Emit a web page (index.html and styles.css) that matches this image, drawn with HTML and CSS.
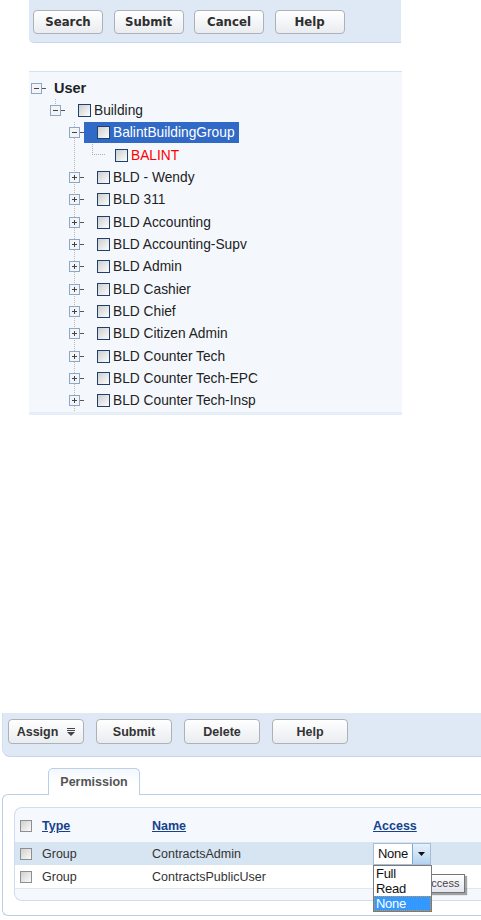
FILE: index.html
```html
<!DOCTYPE html>
<html>
<head>
<meta charset="utf-8">
<title>Permissions</title>
<link rel="stylesheet" href="styles.css">
</head>
<body>
<div class="tb1">
  <button class="btn1">Search</button>
  <button class="btn1">Submit</button>
  <button class="btn1">Cancel</button>
  <button class="btn1">Help</button>
</div>

<div class="tree">
  <div class="row r0">
    <svg class="exp" width="15" height="11" viewBox="0 0 15 11"><rect x="0.5" y="0.5" width="10" height="10" fill="#f3f4f6" stroke="#8ea6c8"/><path d="M3 5.5h5" stroke="#444"/><path d="M11 5.5h4" stroke="#555"/></svg>
    <span class="ulabel">User</span>
  </div>
  <div class="kids1">
    <div class="row r1">
      <svg class="exp" width="15" height="11" viewBox="0 0 15 11"><rect x="0.5" y="0.5" width="10" height="10" fill="#f3f4f6" stroke="#8ea6c8"/><path d="M3 5.5h5" stroke="#444"/><path d="M11 5.5h4" stroke="#555"/></svg>
      <span class="node"><span class="cb"></span><span class="lbl">Building</span></span>
    </div>
    <div class="kids2">
      <div class="row r2">
        <svg class="exp" width="15" height="11" viewBox="0 0 15 11"><rect x="0.5" y="0.5" width="10" height="10" fill="#f3f4f6" stroke="#8ea6c8"/><path d="M3 5.5h5" stroke="#444"/><path d="M11 5.5h4" stroke="#555"/></svg>
        <span class="node sel"><span class="cb"></span><span class="lbl">BalintBuildingGroup</span></span>
      </div>
      <div class="row r3">
        <span class="leaf"></span>
        <span class="node"><span class="cb"></span><span class="lbl red">BALINT</span></span>
      </div>
      <div class="row r2">
        <svg class="exp" width="15" height="11" viewBox="0 0 15 11"><rect x="0.5" y="0.5" width="10" height="10" fill="#f3f4f6" stroke="#8ea6c8"/><path d="M3 5.5h5M5.5 3v5" stroke="#444"/><path d="M11 5.5h4" stroke="#555"/></svg>
        <span class="node"><span class="cb"></span><span class="lbl">BLD - Wendy</span></span>
      </div>
      <div class="row r2">
        <svg class="exp" width="15" height="11" viewBox="0 0 15 11"><rect x="0.5" y="0.5" width="10" height="10" fill="#f3f4f6" stroke="#8ea6c8"/><path d="M3 5.5h5M5.5 3v5" stroke="#444"/><path d="M11 5.5h4" stroke="#555"/></svg>
        <span class="node"><span class="cb"></span><span class="lbl">BLD 311</span></span>
      </div>
      <div class="row r2">
        <svg class="exp" width="15" height="11" viewBox="0 0 15 11"><rect x="0.5" y="0.5" width="10" height="10" fill="#f3f4f6" stroke="#8ea6c8"/><path d="M3 5.5h5M5.5 3v5" stroke="#444"/><path d="M11 5.5h4" stroke="#555"/></svg>
        <span class="node"><span class="cb"></span><span class="lbl">BLD Accounting</span></span>
      </div>
      <div class="row r2">
        <svg class="exp" width="15" height="11" viewBox="0 0 15 11"><rect x="0.5" y="0.5" width="10" height="10" fill="#f3f4f6" stroke="#8ea6c8"/><path d="M3 5.5h5M5.5 3v5" stroke="#444"/><path d="M11 5.5h4" stroke="#555"/></svg>
        <span class="node"><span class="cb"></span><span class="lbl">BLD Accounting-Supv</span></span>
      </div>
      <div class="row r2">
        <svg class="exp" width="15" height="11" viewBox="0 0 15 11"><rect x="0.5" y="0.5" width="10" height="10" fill="#f3f4f6" stroke="#8ea6c8"/><path d="M3 5.5h5M5.5 3v5" stroke="#444"/><path d="M11 5.5h4" stroke="#555"/></svg>
        <span class="node"><span class="cb"></span><span class="lbl">BLD Admin</span></span>
      </div>
      <div class="row r2">
        <svg class="exp" width="15" height="11" viewBox="0 0 15 11"><rect x="0.5" y="0.5" width="10" height="10" fill="#f3f4f6" stroke="#8ea6c8"/><path d="M3 5.5h5M5.5 3v5" stroke="#444"/><path d="M11 5.5h4" stroke="#555"/></svg>
        <span class="node"><span class="cb"></span><span class="lbl">BLD Cashier</span></span>
      </div>
      <div class="row r2">
        <svg class="exp" width="15" height="11" viewBox="0 0 15 11"><rect x="0.5" y="0.5" width="10" height="10" fill="#f3f4f6" stroke="#8ea6c8"/><path d="M3 5.5h5M5.5 3v5" stroke="#444"/><path d="M11 5.5h4" stroke="#555"/></svg>
        <span class="node"><span class="cb"></span><span class="lbl">BLD Chief</span></span>
      </div>
      <div class="row r2">
        <svg class="exp" width="15" height="11" viewBox="0 0 15 11"><rect x="0.5" y="0.5" width="10" height="10" fill="#f3f4f6" stroke="#8ea6c8"/><path d="M3 5.5h5M5.5 3v5" stroke="#444"/><path d="M11 5.5h4" stroke="#555"/></svg>
        <span class="node"><span class="cb"></span><span class="lbl">BLD Citizen Admin</span></span>
      </div>
      <div class="row r2">
        <svg class="exp" width="15" height="11" viewBox="0 0 15 11"><rect x="0.5" y="0.5" width="10" height="10" fill="#f3f4f6" stroke="#8ea6c8"/><path d="M3 5.5h5M5.5 3v5" stroke="#444"/><path d="M11 5.5h4" stroke="#555"/></svg>
        <span class="node"><span class="cb"></span><span class="lbl">BLD Counter Tech</span></span>
      </div>
      <div class="row r2">
        <svg class="exp" width="15" height="11" viewBox="0 0 15 11"><rect x="0.5" y="0.5" width="10" height="10" fill="#f3f4f6" stroke="#8ea6c8"/><path d="M3 5.5h5M5.5 3v5" stroke="#444"/><path d="M11 5.5h4" stroke="#555"/></svg>
        <span class="node"><span class="cb"></span><span class="lbl">BLD Counter Tech-EPC</span></span>
      </div>
      <div class="row r2">
        <svg class="exp" width="15" height="11" viewBox="0 0 15 11"><rect x="0.5" y="0.5" width="10" height="10" fill="#f3f4f6" stroke="#8ea6c8"/><path d="M3 5.5h5M5.5 3v5" stroke="#444"/><path d="M11 5.5h4" stroke="#555"/></svg>
        <span class="node"><span class="cb"></span><span class="lbl">BLD Counter Tech-Insp</span></span>
      </div>
    </div>
  </div>
</div>

<div class="tb2">
  <button class="btn2 assign">Assign <svg width="8" height="8" viewBox="0 0 8 8"><path d="M0 0.5h8M0 2.5h8" stroke="#444"/><path d="M0 4h8l-4 4z" fill="#444"/></svg></button>
  <button class="btn2">Submit</button>
  <button class="btn2">Delete</button>
  <button class="btn2">Help</button>
</div>

<div class="tabs"><div class="tab">Permission</div></div>

<div class="panel">
  <div class="inner">
    <div class="grid head">
      <div class="c1"><span class="tcb"></span></div>
      <div><a class="lnk" href="#">Type</a></div>
      <div><a class="lnk" href="#">Name</a></div>
      <div><a class="lnk" href="#">Access</a></div>
    </div>
    <div class="grid trow hl">
      <div class="c1"><span class="tcb"></span></div>
      <div>Group</div>
      <div>ContractsAdmin</div>
      <div>
        <div class="selbox">
          <span class="seltxt">None</span>
          <span class="selbtn"><svg width="7" height="4" viewBox="0 0 7 4"><path d="M0 0h7l-3.5 4z" fill="#111"/></svg></span>
          <div class="tip">Access</div>
          <div class="ddl">
            <div class="opt">Full</div>
            <div class="opt">Read</div>
            <div class="opt on">None</div>
          </div>
        </div>
      </div>
    </div>
    <div class="grid trow last">
      <div class="c1"><span class="tcb"></span></div>
      <div>Group</div>
      <div>ContractsPublicUser</div>
      <div></div>
    </div>
  </div>
</div>
</body>
</html>
```

FILE: styles.css
```css
* { box-sizing: border-box; }
html, body { margin: 0; padding: 0; overflow: hidden; background: #fff; }
body { font-family: "Liberation Sans", Arial, sans-serif; color: #333; }

/* top toolbar */
.tb1 {
  margin-left: 29px;
  width: 372px;
  height: 43px;
  background: #dfe8f5;
  border-bottom: 1px solid #c4d6eb;
  border-bottom-left-radius: 5px;
  padding: 10px 0 0 4px;
  display: flex;
  gap: 10.5px;
}
.btn1 {
  width: 70px;
  height: 24px;
  border: 1px solid #aeb2b8;
  border-radius: 4px;
  background: linear-gradient(#ffffff, #e9ecf0);
  font-family: "DejaVu Sans", Verdana, sans-serif;
  font-weight: bold;
  font-size: 11.75px;
  color: #2e2e2e;
  padding: 0;
}

/* tree */
.tree {
  margin: 28px 0 0 29px;
  width: 373px;
  height: 344px;
  background: #f4f8fd;
  border-top: 1px solid #d3e1f0;
  border-bottom: 3px solid #e6eef7;
  padding-top: 5px;
  overflow: hidden;
  font-family: "Liberation Sans", Arial, sans-serif;
  font-size: 13.75px;
  color: #222;
}
.row {
  height: 22.35px;
  display: flex;
  align-items: center;
  white-space: nowrap;
}
.exp { display: block; flex: none; }
.r0 { padding-left: 2px; }
.r1 { padding-left: 21px; }
.r2 { padding-left: 40px; }
.r3 { padding-left: 63px; }
.ulabel { margin-left: 8px; font-weight: bold; font-size: 14.5px; color: #222; }
.node {
  display: flex;
  align-items: center;
  height: 21px;
  padding-left: 13px;
  padding-right: 4px;
}
.r3 .node { padding-left: 10px; }
.node.sel { background: #3169c6; color: #fff; }
.cb {
  flex: none;
  width: 13px;
  height: 13px;
  border: 1px solid #1f3f6d;
  background: linear-gradient(135deg, #cdcdcd, #fdfdfd);
}
.lbl { margin-left: 3px; }
.red { color: #ff0000; }
.leaf {
  flex: none;
  align-self: flex-start;
  width: 13px;
  height: 11px;
  border-left: 1px dotted #b0b0b0;
  border-bottom: 1px dotted #b0b0b0;
}
.kids1 {
  background-image: repeating-linear-gradient(#b9b9b9 0 1px, transparent 1px 2px);
  background-size: 1px 6px;
  background-position: 26px 0;
  background-repeat: no-repeat;
}
.kids2 {
  background-image: repeating-linear-gradient(#b9b9b9 0 1px, transparent 1px 2px);
  background-size: 1px 100%;
  background-position: 45px 0;
  background-repeat: no-repeat;
}

/* bottom toolbar */
.tb2 {
  margin: 298px 0 0 2px;
  height: 44px;
  background: #dfe8f5;
  border-bottom: 1px solid #c4d6eb;
  border-left: 1px solid #d3e0ef;
  border-bottom-left-radius: 8px;
  padding: 6px 0 0 5px;
  display: flex;
  gap: 12px;
}
.btn2 {
  width: 76px;
  height: 25px;
  border: 1px solid #aeb2b8;
  border-radius: 4px;
  background: linear-gradient(#ffffff, #e9ecf0);
  font-family: "Liberation Sans", Arial, sans-serif;
  font-weight: bold;
  font-size: 12.5px;
  color: #333;
  padding: 0;
}
.assign {
  display: flex;
  align-items: center;
  justify-content: center;
  gap: 9px;
}
.assign svg { display: block; }

/* tabs */
.tabs {
  margin: 11px 0 0 48px;
  height: 27px;
  position: relative;
  z-index: 1;
  display: flex;
}
.tab {
  width: 92px;
  height: 27px;
  border: 1px solid #b9cfe7;
  border-bottom: none;
  border-radius: 5px 5px 0 0;
  background: linear-gradient(#f3f8fd, #ffffff 60%);
  font-weight: bold;
  font-size: 12.5px;
  color: #555;
  text-align: center;
  line-height: 26px;
}
.panel {
  margin: -1px 0 0 2px;
  height: 122px;
  border: 1px solid #b9cfe7;
  border-right: none;
  border-radius: 6px 0 0 6px;
  background: #fff;
  padding: 12px 0 0 11px;
}
.inner {
  height: 94px;
  border: 1px solid #d0ddec;
  border-right: none;
  border-radius: 8px 0 0 8px;
  background: #f5f9fd;
  padding-top: 7px;
  font-size: 12.5px;
  color: #333;
}
.grid {
  display: grid;
  grid-template-columns: 27px 110px 221px 1fr;
  align-items: center;
}
.c1 { display: flex; align-items: center; padding-left: 5px; }
.head { height: 22px; margin-bottom: 5px; }
.lnk {
  color: #15428b;
  font-weight: bold;
  font-size: 12.5px;
  text-decoration: underline;
}
.tcb {
  display: block;
  width: 12px;
  height: 12px;
  border: 1px solid #8e8e8e;
  background: linear-gradient(135deg, #d0d0d0, #fafafa);
}
.trow { height: 23px; }
.hl { background: #d7e4f2; }
.last { height: 24px; background: #fff; border-bottom: 1px solid #dfe7f0; }

.selbox {
  position: relative;
  width: 58px;
  height: 22px;
  display: flex;
  border: 1px solid #a7bdd6;
  background: #fff;
}
.seltxt {
  flex: 1;
  padding-left: 4px;
  font-size: 13px;
  letter-spacing: -0.3px;
  line-height: 20px;
  color: #111;
}
.selbtn {
  width: 18px;
  height: 20px;
  background: linear-gradient(#e6f1fb, #b5d3ef);
  border-left: 1px solid #7fa7d0;
  display: flex;
  align-items: center;
  justify-content: center;
}
.selbtn svg { display: block; }
.tip {
  position: absolute;
  left: 38px;
  top: 30px;
  width: 53px;
  height: 19px;
  border: 1px solid #767676;
  background: linear-gradient(#ffffff, #e4e5ee);
  box-shadow: 2px 2px 1px rgba(0, 0, 0, 0.35);
  font-size: 11px;
  color: #444;
  padding-left: 11px;
  line-height: 17px;
  z-index: 1;
}
.ddl {
  position: absolute;
  left: -1px;
  top: 21px;
  width: 59px;
  border: 1px solid #7a7a7a;
  background: #fff;
  z-index: 2;
  font-size: 13px;
  letter-spacing: -0.3px;
  color: #111;
}
.opt {
  height: 15.33px;
  line-height: 15px;
  padding-left: 2px;
}
.opt.on {
  background: #3399ff;
  color: #fff;
  outline: 1px dotted #e0902e;
  outline-offset: -1px;
}
```
